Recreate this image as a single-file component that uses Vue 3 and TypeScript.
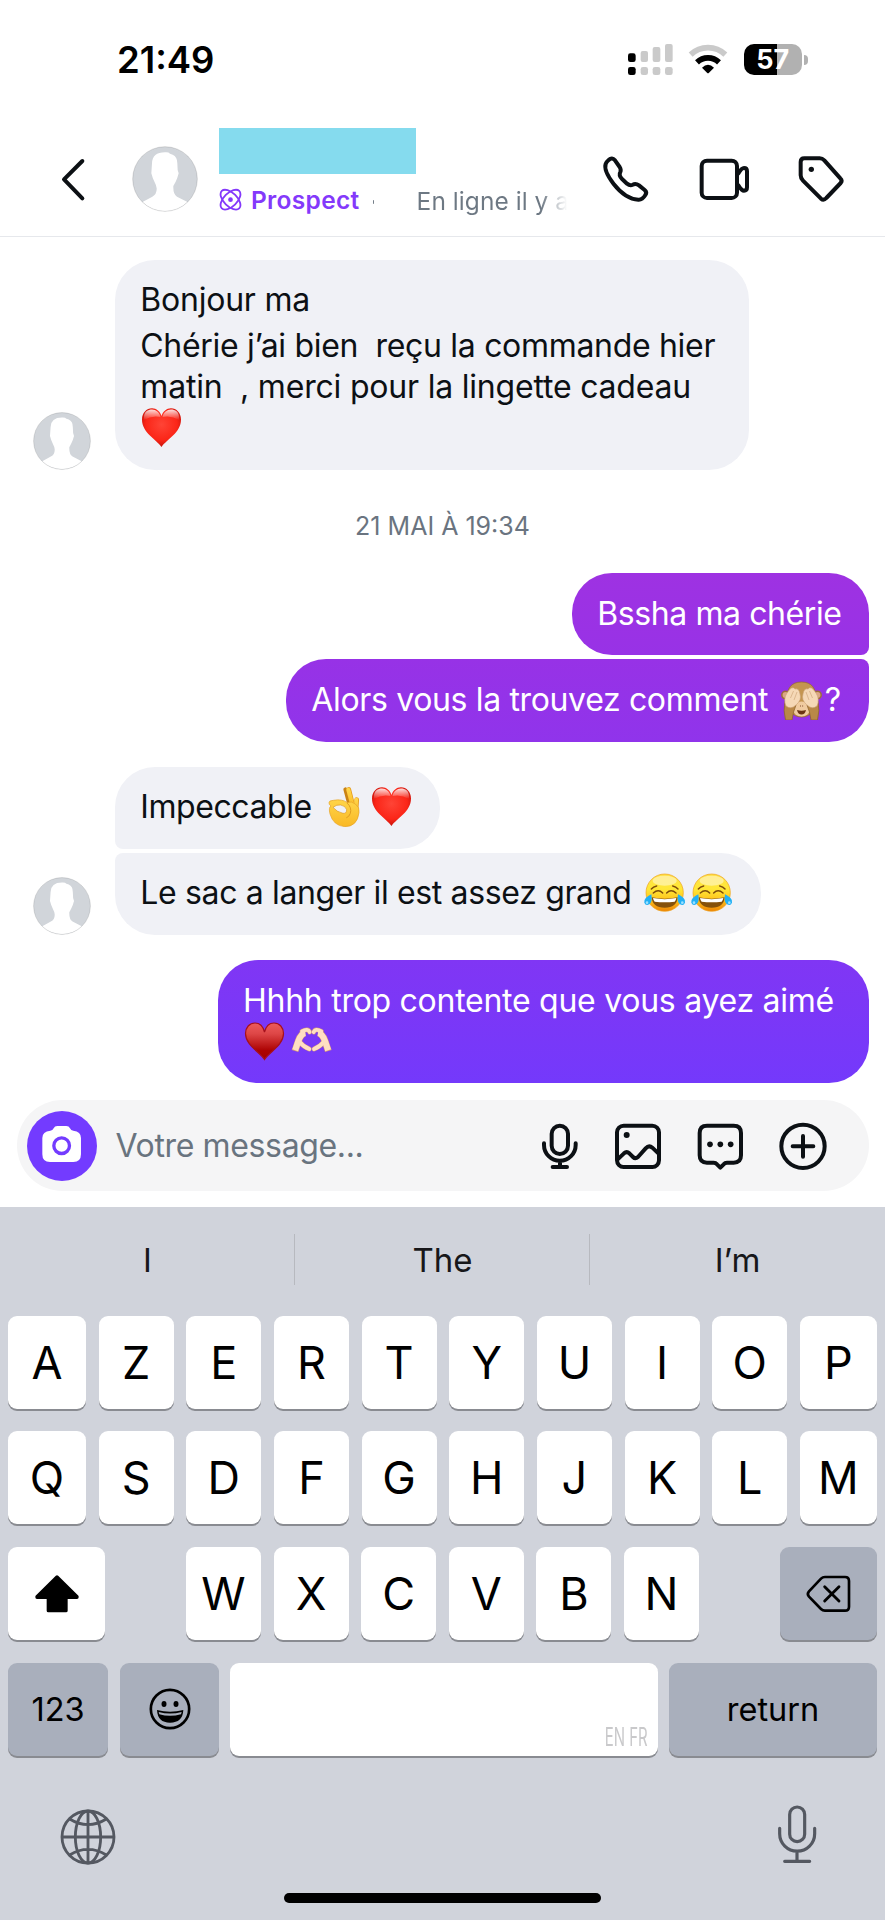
<script setup lang="ts">
type EmojiName = 'heart' | 'darkHeart' | 'joy' | 'okHand' | 'monkey' | 'heartHands'

interface Part {
  text?: string
  emoji?: EmojiName
  tracking?: number
}

interface Message {
  id: string
  lines: Part[][]
}

const welcome: Message = {
  id: 'welcome',
  lines: [
    [{ text: 'Bonjour ma', tracking: -0.22 }],
    [{ text: 'Chérie j’ai bien  reçu la commande hier', tracking: -0.31 }],
    [{ text: 'matin  , merci pour la lingette cadeau', tracking: -0.2 }],
    [{ emoji: 'heart' }],
  ],
}

const bssha: Message = { id: 'bssha', lines: [[{ text: 'Bssha ma chérie', tracking: -0.41 }]] }
const alors: Message = {
  id: 'alors',
  lines: [[{ text: 'Alors vous la trouvez comment ', tracking: -0.35 }, { emoji: 'monkey' }, { text: '?' }]],
}
const impeccable: Message = {
  id: 'impeccable',
  lines: [[{ text: 'Impeccable ', tracking: -0.42 }, { emoji: 'okHand' }, { emoji: 'heart' }]],
}
const sac: Message = {
  id: 'sac',
  lines: [[{ text: 'Le sac a langer il est assez grand ', tracking: -0.348 }, { emoji: 'joy' }, { emoji: 'joy' }]],
}
const contente: Message = {
  id: 'contente',
  lines: [
    [{ text: 'Hhhh trop contente que vous ayez aimé', tracking: -0.27 }],
    [{ emoji: 'darkHeart' }, { emoji: 'heartHands' }],
  ],
}

interface Group {
  id: string
  side: 'in' | 'out'
  messages: Message[]
  stamp?: string
}

const groups: Group[] = [
  { id: 'g1', side: 'in', messages: [welcome], stamp: '21 MAI À 19:34' },
  { id: 'g2', side: 'out', messages: [bssha, alors] },
  { id: 'g3', side: 'in', messages: [impeccable, sac] },
  { id: 'g4', side: 'out', messages: [contente] },
]

const suggestions = ['I', 'The', 'I’m']
const letterRows = ['AZERTYUIOP', 'QSDFGHJKLM'].map((r) => r.split(''))
const lowerRow = 'WXCVBN'.split('')
</script>

<template>
  <div class="phone">
    <svg class="defs" width="0" height="0" aria-hidden="true">
      <defs>
        <radialGradient id="redHeart" cx="0.5" cy="0.42" r="0.62">
          <stop offset="0" stop-color="#ff4436" />
          <stop offset="0.65" stop-color="#fb2618" />
          <stop offset="1" stop-color="#b90f08" />
        </radialGradient>
        <linearGradient id="heartShine" x1="0" y1="0" x2="0" y2="1">
          <stop offset="0" stop-color="#fff" stop-opacity="0.85" />
          <stop offset="1" stop-color="#fff" stop-opacity="0" />
        </linearGradient>
        <linearGradient id="deepHeart" x1="0" y1="0" x2="0" y2="1">
          <stop offset="0" stop-color="#ee5b5c" />
          <stop offset="0.3" stop-color="#dd4646" />
          <stop offset="0.75" stop-color="#ad0303" />
          <stop offset="1" stop-color="#a50000" />
        </linearGradient>
        <linearGradient id="face" x1="0" y1="0" x2="0" y2="1">
          <stop offset="0" stop-color="#ffdf45" />
          <stop offset="0.4" stop-color="#ffe838" />
          <stop offset="0.7" stop-color="#ffc21c" />
          <stop offset="1" stop-color="#ec8405" />
        </linearGradient>
        <linearGradient id="hand" x1="0" y1="0" x2="0" y2="1">
          <stop offset="0" stop-color="#ffd54a" />
          <stop offset="1" stop-color="#f9b824" />
        </linearGradient>
        <clipPath id="disc"><circle cx="494" cy="537" r="96.500" /></clipPath>
        <symbol id="person" viewBox="395 438 198 198">
          <circle cx="494" cy="537" r="97" fill="#d1d5da" />
          <g clip-path="url(#disc)">
            <path fill="#fff" d="M425 607L456 590Q470 583 469 565Q468 556 463 547Q457 536 453 520L455 490Q456 457 494 457Q505 456 509 461L517 464Q531 470 531 490L532 510L535 520Q531 536 526 545L519 558Q518 583 530 590L563 607L560 640H430Z" />
          </g>
          <circle cx="494" cy="537" r="97" fill="none" stroke="#000" stroke-opacity="0.12" stroke-width="3" />
        </symbol>
      </defs>
    </svg>

    <div class="status">
      <span class="time">21:49</span>
      <svg class="radio" viewBox="550 120 312 114">
        <g>
          <rect x="556" y="160" width="23" height="26" rx="7" />
          <rect x="556" y="201" width="23" height="24" rx="7" />
        </g>
        <g fill="#cacaca">
          <rect x="594" y="153" width="22" height="33" rx="6" />
          <rect x="594" y="201" width="22" height="24" rx="7" />
          <rect x="630" y="141" width="23" height="45" rx="6" />
          <rect x="630" y="201" width="23" height="24" rx="7" />
          <rect x="667" y="132" width="23" height="54" rx="6" />
          <rect x="667" y="201" width="23" height="24" rx="7" />
        </g>
        <path d="M744 164A75 75 0 0 1 848 164" fill="none" stroke="#cacaca" stroke-width="17" />
        <path d="M763 187A48 48 0 0 1 829 187" fill="none" stroke="#000" stroke-width="17" />
        <path d="M778 203Q796 186 814 203L799 218Q796 221 793 218Z" />
      </svg>
      <div class="battery"><span>57</span></div>
      <i class="nub"></i>
    </div>

    <header class="header">
      <svg class="back ink" viewBox="180 470 80 134"><path d="M247 482L192 537L247 594" /></svg>
      <svg class="avatar large"><use href="#person" /></svg>
      <div class="who">
        <div class="name"></div>
        <div class="meta">
          <svg class="atom" viewBox="657 561 69 69">
            <g fill="none" stroke="#8439fb" stroke-width="5.500">
              <ellipse cx="691.500" cy="596" rx="37" ry="20" transform="rotate(45 691.5 596)" />
              <ellipse cx="691.500" cy="596" rx="37" ry="20" transform="rotate(-45 691.5 596)" />
            </g>
            <circle cx="691.500" cy="596" r="7" fill="#8439fb" />
          </svg>
          <b>Prospect</b>
          <i class="dot"></i>
          <span class="seen">En ligne il y a</span>
        </div>
      </div>
      <svg class="phone-icon ink" viewBox="474 462 150 150"><path d="M497 480Q507 470 516 481L530 501Q535 509 532 516Q526 526 538 538L552 551Q561 558 569 554Q578 549 588 556L605 570Q613 577 607 585Q598 600 586 599C562 598 534 580 512 552C496 531 483 506 488 492Q490 486 497 480Z" /></svg>
      <svg class="video ink" viewBox="765 462 162 150">
        <rect x="776" y="482" width="106" height="112" rx="16" />
        <path d="M886 520Q896 504 903 504Q912 504 912 514V562Q912 572 903 572Q896 572 886 556" />
      </svg>
      <svg class="tag ink" viewBox="1062 462 150 150">
        <path d="M1084 475H1130Q1138 475 1144 481L1192 535Q1199 542 1193 549L1150 594Q1142 603 1134 596L1080 542Q1073 535 1073 526V486Q1073 475 1084 475Z" />
        <circle class="solid" cx="1105" cy="508" r="8" />
      </svg>
    </header>

    <main class="thread">
      <template v-for="g in groups" :key="g.id">
        <section class="group" :class="g.side">
          <svg v-if="g.side === 'in'" class="avatar small"><use href="#person" /></svg>
          <div class="stack">
            <div v-for="m in g.messages" :key="m.id" class="bubble" :class="m.id">
              <div v-for="(line, li) in m.lines" :key="li" class="line">
                <template v-for="(p, pi) in line" :key="pi">
                  <span v-if="p.text" :style="{ letterSpacing: (p.tracking ?? 0) + 'px' }">{{ p.text }}</span>
                  <svg v-else-if="p.emoji === 'heart'" class="emoji" viewBox="0 0 47 41">
                    <path fill="url(#redHeart)" d="M23.500 40C18 32 4 26 4 12.500C4 6 8.500 1.300 14 1.300C18.500 1.300 22 4.500 23.500 9C25 4.500 28.500 1.300 33 1.300C38.500 1.300 43 6 43 12.500C43 26 29 32 23.500 40Z" />
                    <path fill="url(#heartShine)" d="M6 10C6 5 10 2.600 14 2.600C18 2.600 21.500 5.500 22.500 10Q14 8 6 13ZM41 10C41 5 37 2.600 33 2.600C29 2.600 25.500 5.500 24.500 10Q33 8 41 13Z" />
                  </svg>
                  <svg v-else-if="p.emoji === 'darkHeart'" class="emoji" viewBox="0 0 47 41">
                    <path fill="url(#deepHeart)" stroke="#a6101c" stroke-width="1.200" d="M23.500 38.500C19 31 4.500 24.500 4.500 12.500C4.500 6.500 8.500 2 14 2C18.500 2 22 5 23.500 11C25 5 28.500 2 33 2C38.500 2 42.500 6.500 42.500 12.500C42.500 24.500 28 31 23.500 38.500Z" />
                  </svg>
                  <svg v-else-if="p.emoji === 'joy'" class="emoji" viewBox="591 366 141 123">
                    <circle cx="662" cy="428" r="56" fill="url(#face)" stroke="#eda01a" stroke-width="2" />
                    <ellipse cx="662" cy="392" rx="36" ry="15" fill="#fff" opacity="0.45" />
                    <g fill="none" stroke="#7d4b0b" stroke-width="4.500" stroke-linecap="round">
                      <path d="M628 429Q643 416 656 429" />
                      <path d="M668 429Q681 416 696 429" />
                      <path d="M622 417Q628 410 638 408" />
                      <path d="M702 417Q696 410 686 408" />
                    </g>
                    <path fill="#85510b" d="M623 442Q662 450 701 442Q699 473 662 473Q625 473 623 442Z" />
                    <path fill="#fff" d="M627 444Q662 451 697 444Q696 450 692 455Q662 459 632 455Q628 450 627 444Z" />
                    <path fill="#22b0f5" d="M622 433Q597 445 601 458Q605 469 616 463Q626 456 622 433Z" />
                    <path fill="#22b0f5" d="M702 433Q727 445 723 458Q719 469 708 463Q698 456 702 433Z" />
                    <circle cx="609" cy="458" r="4" fill="#9be0ff" />
                    <circle cx="715" cy="458" r="4" fill="#9be0ff" />
                  </svg>
                  <svg v-else-if="p.emoji === 'okHand'" class="emoji" viewBox="963 108 141 123">
                    <g fill="none" stroke-linecap="round">
                      <path stroke="#c98315" stroke-width="12" d="M1050 170L1036 118" />
                      <path stroke="#e59a18" stroke-width="15" d="M1060 175L1046 119" />
                      <path stroke="url(#hand)" stroke-width="12" d="M1060 175L1045 119" />
                      <path stroke="#e59a18" stroke-width="14" d="M1068 185L1070 149" />
                      <path stroke="url(#hand)" stroke-width="11" d="M1067 185L1069 149" />
                    </g>
                    <path fill="url(#hand)" stroke="#e5a225" stroke-width="2" d="M987 158Q986 152 1000 151Q1026 146 1042 158Q1054 152 1066 162Q1080 172 1077 188Q1072 230 1034 230Q1000 227 990 192Q985 172 993 168Q986 164 987 158Z" />
                    <path fill="#f0f1f6" stroke="#dd981f" stroke-width="2" d="M999 172Q1010 163 1022 165Q1036 167 1040 179Q1040 191 1029 190Q1010 186 999 172Z" />
                    <path fill="none" stroke="#e09d20" stroke-width="3" stroke-linecap="round" d="M1042 160Q1056 172 1051 190Q1048 200 1040 203" />
                  </svg>
                  <svg v-else-if="p.emoji === 'monkey'" class="emoji" viewBox="0 0 47 41">
                    <g fill="#dba585" stroke="#9b6d3a" stroke-width="1.500">
                      <circle cx="7.500" cy="16" r="3.700" />
                      <circle cx="39.500" cy="16" r="3.700" />
                    </g>
                    <path fill="#c4954f" stroke="#94672c" stroke-width="0.700" d="M23.500 3C34 3 38.500 10 37.500 19L34 33Q30 38 23.500 38Q17 38 13 33L9.500 19C8.500 10 13 3 23.500 3Z" />
                    <ellipse cx="23.500" cy="30" rx="8.500" ry="7.500" fill="#f0cba0" />
                    <path fill="#b98847" stroke="#8a6029" stroke-width="0.700" d="M7 22Q5 32 7.500 41H14Q15 33 18 26ZM40 22Q42 32 39.500 41H33Q32 33 29 26Z" />
                    <g fill="#f5d8b6" stroke="#c99f74" stroke-width="0.600">
                      <path d="M8 27Q5 20 9 14Q14 6 17 10Q21 9 22 15Q24 21 18 26Q13 31 8 27Z" />
                      <path d="M39 27Q42 20 38 14Q33 6 30 10Q26 9 25 15Q23 21 29 26Q34 31 39 27Z" />
                      <path fill="none" d="M12.500 19L15.500 12M16 21L19 13M34.500 19L31.500 12M31 21L28 13" />
                    </g>
                    <path fill="#6b3414" d="M19 31Q23.500 32.500 28 31Q27 35.500 23.500 35.500Q20 35.500 19 31Z" />
                    <path stroke="#6b3414" stroke-width="1.200" d="M22 27H22.800M24.300 27H25.100" />
                  </svg>
                  <svg v-else class="emoji" viewBox="868 213 141 123">
                    <g v-for="side in ['left', 'right']" :key="side" :transform="side === 'right' ? 'matrix(-1 0 0 1 1878 0)' : undefined" fill="none">
                      <g stroke="#d79a75">
                        <path stroke-width="21" d="M889 303L899 273Q907 250 920 248" />
                        <path stroke-width="14" stroke-linecap="round" d="M910 244Q928 234 933 246M903 276Q914 290 932 297" />
                      </g>
                      <g stroke="#ffdfc3">
                        <path stroke-width="18" d="M889.500 301L899 273Q907 251 920 249" />
                        <path stroke-width="11" stroke-linecap="round" d="M910 244Q928 234 933 246M903 276Q914 290 932 297" />
                      </g>
                    </g>
                  </svg>
                </template>
              </div>
            </div>
          </div>
        </section>
        <div v-if="g.stamp" class="stamp">{{ g.stamp }}</div>
      </template>
    </main>

    <div class="composer">
      <span class="camera">
        <svg viewBox="120 520 130 120">
          <path fill="#fff" d="M151 540Q158 540 161 533Q164 526 172 526H199Q207 526 210 533Q213 540 220 540Q243 542 243 562V611Q243 634 220 634H150Q127 634 127 611V562Q127 542 151 540Z" />
          <circle cx="185" cy="585" r="23.500" fill="#fff" stroke="#733bff" stroke-width="10" />
        </svg>
      </span>
      <span class="placeholder">Votre message...</span>
      <svg class="c-mic ink" viewBox="291 510 120 150">
        <rect x="326" y="524" width="49" height="85" rx="24.500" />
        <path d="M303 577V582A47.500 47.500 0 0 0 398 582V577M351 630V648M329 648H372" />
      </svg>
      <svg class="c-image ink" viewBox="510 510 150 150">
        <rect x="522" y="524" width="126" height="124" rx="20" />
        <path d="M524 625L543 607Q551 600 559 607L570 618Q577 625 585 618L608 592Q618 581 628 590L646 607" />
        <circle class="solid" cx="551" cy="552" r="9" />
      </svg>
      <svg class="c-chat ink" viewBox="756 510 150 150">
        <path d="M792 524H872Q894 524 894 546V613Q894 635 872 635H852Q846 635 842 640L832 650L822 640Q818 635 812 635H792Q770 635 770 613V546Q770 524 792 524Z" />
        <g class="solid"><circle cx="801" cy="580" r="8.500" /><circle cx="832" cy="580" r="8.500" /><circle cx="863" cy="580" r="8.500" /></g>
      </svg>
      <svg class="c-plus ink" viewBox="1004 510 150 150">
        <circle cx="1079" cy="586" r="65" />
        <path d="M1048 586H1110M1079 555V617" />
      </svg>
    </div>

    <div class="keyboard">
      <div class="suggestions">
        <span v-for="s in suggestions" :key="s">{{ s }}</span>
      </div>
      <div v-for="(row, i) in letterRows" :key="i" class="row letters">
        <span v-for="k in row" :key="k" class="key">{{ k }}</span>
      </div>
      <div class="row lower">
        <span class="key">
          <svg viewBox="97 127 150 132"><path d="M172 142L112 201V203H146V243H199V203H232V201Z" stroke="#000" stroke-width="10" stroke-linejoin="round" /></svg>
        </span>
        <div class="mid">
          <span v-for="k in lowerRow" :key="k" class="key">{{ k }}</span>
        </div>
        <span class="key dark">
          <svg viewBox="1085 128 150 132" fill="none" stroke="#000" stroke-linecap="round">
            <path stroke-width="8" d="M1148 143H1208Q1220 143 1220 155V232Q1220 244 1208 244H1148Q1141 244 1136 239L1100 202Q1093 194 1100 186L1136 148Q1141 143 1148 143Z" />
            <path stroke-width="8.500" d="M1147 172L1190 215M1190 172L1147 215" />
          </svg>
        </span>
      </div>
      <div class="row bottom">
        <span class="key dark word">123</span>
        <span class="key dark">
          <svg viewBox="433 472 150 132">
            <circle cx="508" cy="538" r="57.500" fill="none" stroke="#000" stroke-width="8" />
            <ellipse cx="490" cy="523" rx="7.500" ry="9" />
            <ellipse cx="526" cy="523" rx="7.500" ry="9" />
            <path d="M469 541Q508 552 548 541Q546 579 508 579Q471 579 469 541Z" />
            <path fill="#a9afbc" d="M474 547Q508 556 543 547L541 554Q508 563 476 554Z" />
          </svg>
        </span>
        <span class="key space"><small>EN FR</small></span>
        <span class="key dark word">return</span>
      </div>
      <div class="tray">
        <svg class="globe" viewBox="172 832 180 180" fill="none" stroke="#545861" stroke-width="8.500">
          <circle cx="262" cy="922" r="78" />
          <ellipse cx="262" cy="922" rx="38" ry="78" />
          <path d="M262 844V1000M184 922H340M207 868Q262 902 317 868M207 976Q262 942 317 976" />
        </svg>
        <svg class="dictate" viewBox="1002 822 120 186" fill="none" stroke="#545861" stroke-width="9.500" stroke-linecap="round">
          <rect x="1040" y="834" width="45" height="104" rx="22.500" />
          <path d="M1010 898V914A52.500 52.500 0 0 0 1115 914V898M1062 966V997M1025 997H1100" />
        </svg>
      </div>
      <div class="home"></div>
    </div>
  </div>
</template>

<style>
body {
  margin: 0;
  background: #fff;
}
</style>

<style scoped>
.phone {
  width: 885px;
  height: 1920px;
  display: flex;
  flex-direction: column;
  overflow: hidden;
  background: #fff;
  color: #0c1014;
  font-family: Inter, "Liberation Sans", sans-serif;
  font-size: 32px;
}
.defs {
  position: absolute;
}
svg {
  display: block;
  flex: none;
}
.ink {
  fill: none;
  stroke: #0c1014;
  stroke-width: 12;
  stroke-linecap: round;
  stroke-linejoin: round;
}
.ink .solid {
  fill: #0c1014;
  stroke: none;
}

.status {
  height: 75px;
  flex: none;
  display: flex;
  align-items: flex-end;
  color: #000;
}
.time {
  width: 509px;
  margin: 0 0.3px -1px 117px;
  font-size: 36.500px;
  font-weight: 600;
  line-height: 32px;
}
.radio {
  width: 104px;
  height: 38px;
  margin-bottom: -3px;
}
.battery {
  width: 58px;
  height: 31px;
  margin-left: 13.400px;
  border-radius: 10px;
  background: linear-gradient(90deg, #000 33px, #b1b1b1 33px);
  color: #fff;
  text-align: center;
  font-size: 27px;
  font-weight: 700;
  line-height: 31px;
}
.nub {
  width: 4px;
  height: 10px;
  margin: 0 0 10px 2px;
  border-radius: 0 5px 5px 0;
  background: #b1b1b1;
}

.header {
  height: 161px;
  flex: none;
  display: flex;
  align-items: flex-start;
  border-bottom: 1px solid #e6e8ec;
}
.back {
  width: 26.700px;
  height: 44.700px;
  margin: 82px 0 0 60px;
}
.avatar.large {
  width: 66px;
  height: 66px;
  margin: 71px 0 0 45px;
}
.who {
  width: 350.200px;
  margin: 53px 0 0 21.300px;
}
.name {
  width: 197.500px;
  height: 46px;
  background: #85dbee;
}
.meta {
  display: flex;
  align-items: center;
  height: 30px;
  margin-top: 11px;
  font-size: 24.500px;
}
.atom {
  width: 23px;
  height: 23px;
  margin-top: -2px;
}
.meta b {
  margin-left: 9px;
  font-weight: 600;
  color: #8439fb;
  letter-spacing: 0.300px;
}
.dot {
  width: 4px;
  height: 4px;
  margin: 4px 0 0 13.500px;
  border-radius: 50%;
  background: #6d7883;
}
.seen {
  margin: 2px 0 0 43px;
  color: #6d7883;
  letter-spacing: 0.050px;
  white-space: nowrap;
  background: linear-gradient(90deg, #6d7883 0 124px, #6d788300 150px);
  background-clip: text;
  -webkit-text-fill-color: transparent;
}
.phone-icon {
  width: 50px;
  height: 50px;
  margin: 79px 0 0 31.700px;
}
.video {
  width: 54px;
  height: 50px;
  margin: 79px 0 0 47px;
}
.tag {
  width: 50px;
  height: 50px;
  margin: 79px 0 0 45px;
}

.thread {
  height: 846px;
  flex: none;
  padding-top: 23px;
  box-sizing: border-box;
}
.group {
  display: flex;
  align-items: flex-end;
}
.group.in {
  padding-left: 33px;
}
.group.out {
  justify-content: flex-end;
  padding-right: 16.500px;
}
.group.in + .group.out {
  margin-top: 24.500px;
}
.group.out + .group.in {
  margin-top: 25px;
}
.avatar.small {
  width: 58px;
  height: 58px;
}
.stack {
  display: flex;
  flex-direction: column;
  gap: 4px;
}
.in .stack {
  margin-left: 24px;
  align-items: flex-start;
}
.out .stack {
  align-items: flex-end;
}
.bubble {
  box-sizing: border-box;
  height: 82.300px;
  padding: 19.500px 0 0 25.300px;
  border-radius: 40px;
  background: #f0f1f6;
}
.out .bubble {
  color: #fff;
}
.line {
  display: flex;
  height: 41px;
  line-height: 41px;
  white-space: pre;
}
.emoji {
  width: 47px;
  height: 41px;
}
.emoji:first-child {
  margin-left: -2px;
}
span + .emoji {
  margin-left: 1px;
}
.bubble.welcome {
  width: 634px;
  height: 210px;
  padding-top: 19px;
}
.welcome .line:first-child {
  margin-bottom: 5px;
}
.bubble.bssha {
  width: 296.500px;
  border-bottom-right-radius: 8px;
  background: linear-gradient(#9e32e2, #9832e6);
}
.bubble.alors {
  width: 582.500px;
  border-top-right-radius: 8px;
  background: linear-gradient(#9732e6, #9034eb);
}
.bubble.impeccable {
  width: 325px;
  border-bottom-left-radius: 8px;
}
.bubble.sac {
  width: 646px;
  border-top-left-radius: 8px;
}
.bubble.contente {
  width: 650.500px;
  height: 123.500px;
  padding-top: 20.500px;
  padding-left: 25px;
  background: linear-gradient(#8036f4, #7439fb);
}
.stamp {
  padding: 41.500px 0 32.500px;
  color: #6a7480;
  font-size: 25px;
  line-height: 29px;
  text-align: center;
}

.composer {
  height: 91px;
  flex: none;
  display: flex;
  align-items: center;
  box-sizing: border-box;
  margin: 17px 16.500px 16px 17px;
  padding-left: 10px;
  border-radius: 46px;
  background: #f5f5f6;
}
.camera {
  display: grid;
  place-items: center;
  width: 70px;
  height: 70px;
  flex: none;
  border-radius: 50%;
  background: #733bff;
}
.camera svg {
  width: 43.300px;
  height: 40px;
  margin-top: -4px;
}
.placeholder {
  width: 425px;
  margin-left: 18.500px;
  color: #69747f;
  letter-spacing: -0.360px;
}
.c-mic {
  width: 40px;
  height: 50px;
  margin-left: -0.500px;
}
.c-image {
  width: 50px;
  height: 50px;
  margin-left: 33px;
}
.c-chat,
.c-plus {
  width: 50px;
  height: 50px;
  margin-left: 32.300px;
}

.keyboard {
  flex: 1;
  background: #d0d3db;
  color: #000;
}
.suggestions {
  display: grid;
  grid-template-columns: repeat(3, 1fr);
  height: 51px;
  padding-top: 27px;
  line-height: 53px;
  font-size: 33px;
  text-align: center;
  color: #17171a;
}
.suggestions span {
  height: 51px;
}
.suggestions span + span {
  box-shadow: -1px 0 #b7b9bf;
}
.row {
  display: flex;
  justify-content: space-between;
  margin: 0 8px;
}
.letters {
  margin-top: 22px;
}
.suggestions + .letters {
  margin-top: 31px;
}
.key {
  display: flex;
  align-items: center;
  justify-content: center;
  width: 75px;
  height: 93px;
  border-radius: 9px;
  background: #fff;
  box-shadow: 0 2px #898b91;
  font-size: 45px;
  line-height: 93px;
}
.letters .key:first-child {
  width: 78px;
}
.letters .key:last-child {
  width: 77px;
}
.lower {
  margin-top: 23px;
}
.lower > .key {
  width: 97px;
}
.mid {
  display: flex;
  justify-content: space-between;
  width: 513px;
}
.key svg {
  width: 50px;
  height: 44px;
}
.key.dark {
  background: #a9afbc;
}
.bottom {
  margin-top: 22.500px;
}
.bottom .key {
  width: 99px;
}
.bottom .key:first-child {
  width: 100px;
  margin-right: 1px;
}
.bottom .space {
  width: 428px;
  justify-content: flex-end;
  align-items: flex-end;
}
.bottom .key:last-child {
  width: 208px;
}
.key.word {
  font-size: 32.500px;
}
.space small {
  margin: 0 10px 6px 0;
  color: #c9c9cb;
  font-size: 25px;
  line-height: 26px;
  transform: scaleX(0.6);
  transform-origin: right center;
}
.tray {
  display: flex;
  justify-content: space-between;
  margin: 47.500px 68px 0 57.500px;
  height: 64px;
}
.globe {
  width: 60px;
  height: 60px;
  margin-top: 4px;
}
.dictate {
  width: 40px;
  height: 62px;
}
.home {
  width: 317px;
  height: 10.500px;
  margin: 25.500px 0 0 284px;
  border-radius: 6px;
  background: #000;
}
</style>
